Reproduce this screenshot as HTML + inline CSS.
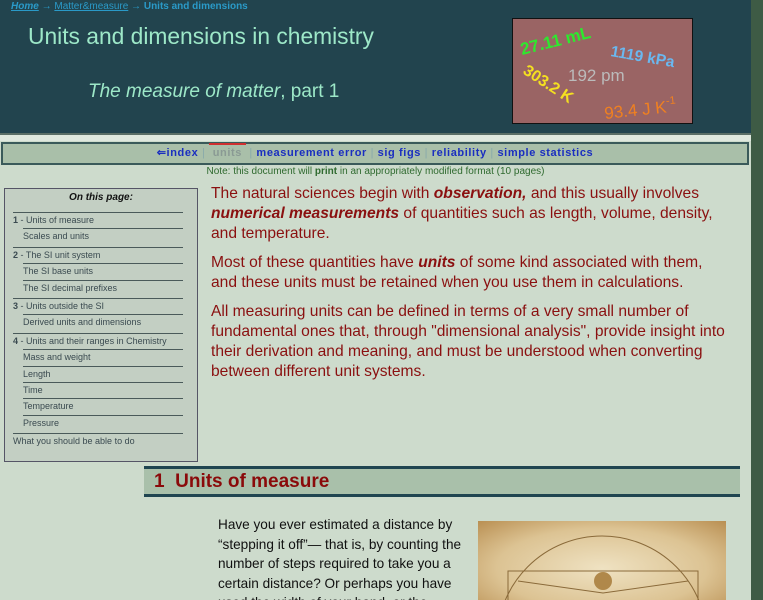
<!DOCTYPE html>
<html><head><meta charset="utf-8"><style>
*{margin:0;padding:0;box-sizing:border-box}
html,body{width:763px;height:600px;overflow:hidden}
body{background:#cddbcc;font-family:"Liberation Sans",Arial,sans-serif;position:relative}
.right{position:absolute;left:751px;top:0;width:12px;height:600px;background:#3e5b45}
.hdr{position:absolute;left:0;top:0;width:751px;height:133px;background:#22444e}
.crumb{position:absolute;left:11px;top:1px;font-size:10px;color:#2a9ac8}
.crumb a{color:#2a9ac8;text-decoration:underline}
.crumb b{color:#2a9ac8}
h1{position:absolute;left:28px;top:23px;font-weight:normal;font-size:22.8px;color:#9de8c8}
.sub{position:absolute;left:88px;top:81px;font-size:19px;color:#9de8c8}
.box{position:absolute;left:512px;top:18px;width:181px;height:106px;background:#9a6464;border:1px solid #111}
.strip{position:absolute;left:0;top:133px;width:751px;height:8px;background:#dfe8de;border-top:2px solid #5a6e66}
.nav{position:absolute;left:1px;top:142px;width:748px;height:23px;background:#a9bfa9;border:2px solid #3a5a5a;text-align:center;font-size:11px;font-weight:bold;letter-spacing:.6px;line-height:19px;color:#1a2ec0}
.nav .s{color:#8aa;font-weight:normal}
.nav .u{color:#8a9a94;position:relative}
.nav .u:before{content:"";position:absolute;left:-4px;right:-4px;top:-4px;height:2px;background:#d03030}
.note{position:absolute;left:0;width:751px;top:166px;text-align:center;font-size:10px;color:#2f6a2f}
.side{position:absolute;left:4px;top:188px;width:194px;height:274px;border:1px solid #556;background:#c3cfc3;font-size:9px;color:#3a4a50}
.side .t{text-align:center;font-style:italic;font-weight:bold;font-size:10px;color:#111;margin-top:3px;height:20px}
.side div.i{height:16.4px;line-height:15px;border-top:1.5px solid #4a5a5a;margin-right:14px}
.side div.j{margin-left:18px}
.side div.k{margin-left:8px}
.side div.g{margin-top:2px}
.main{position:absolute;left:211px;top:184px;width:520px;font-size:15.6px;line-height:20px;color:#8a1010}
.main p{margin-bottom:9px}
.h2{position:absolute;left:144px;top:466px;width:596px;height:31px;background:#a9c0aa;border-top:3px solid #1f4550;border-bottom:3px solid #1f4550;font-size:19px;font-weight:bold;color:#8a0a0a;padding-left:10px;line-height:25px}
.p2{position:absolute;left:218px;top:515px;width:262px;height:85px;overflow:hidden;font-size:13.6px;line-height:19.5px;color:#111}
.img{position:absolute;left:478px;top:521px;width:248px;height:79px;background:radial-gradient(ellipse at 50% 60%,#efe2c2 0%,#dcc393 60%,#b98f52 100%)}
</style></head><body>
<div class="right"></div>
<div class="hdr">
<div class="crumb"><a><i><b>Home</b></i></a> → <a>Matter&amp;measure</a> → <b>Units and dimensions</b></div>
<h1>Units and dimensions in chemistry</h1>
<div class="sub"><i>The measure of matter</i>, part 1</div>
<div class="box"><svg width="181" height="106" style="font-family:'Liberation Sans',sans-serif;font-weight:bold">
<text x="9" y="36" font-size="17" fill="#2ee82e" transform="rotate(-14 9 36)">27.11 mL</text>
<text x="97" y="37" font-size="15.5" fill="#6ab8f0" transform="rotate(10 97 37)">1119 kPa</text>
<text x="55" y="62" font-size="17" fill="#bbb" font-weight="normal">192 pm</text>
<text x="9" y="54" font-size="16" fill="#f4e020" transform="rotate(33 9 54)">303.2 K</text>
<text x="92" y="100" font-size="17" fill="#f08020" font-weight="normal" transform="rotate(-6 92 100)">93.4 J K<tspan font-size="11" dy="-8">-1</tspan></text>
</svg></div>
</div>
<div class="strip"></div>
<div class="nav">⇐index <span class="s">|</span> &nbsp;<span class="u">units</span> &nbsp;<span class="s">|</span> measurement error <span class="s">|</span> sig figs <span class="s">|</span> reliability <span class="s">|</span> simple statistics</div>
<div class="note">Note: this document will <b>print</b> in an appropriately modified format (10 pages)</div>
<div class="side">
<div class="t">On this page:</div>
<div class="i k"><b>1</b> - Units of measure</div>
<div class="i j">Scales and units</div>
<div class="i k g"><b>2</b> - The SI unit system</div>
<div class="i j">The SI base units</div>
<div class="i j">The SI decimal prefixes</div>
<div class="i k g"><b>3</b> - Units outside the SI</div>
<div class="i j">Derived units and dimensions</div>
<div class="i k g"><b>4</b> - Units and their ranges in Chemistry</div>
<div class="i j">Mass and weight</div>
<div class="i j">Length</div>
<div class="i j">Time</div>
<div class="i j">Temperature</div>
<div class="i j">Pressure</div>
<div class="i k g">What you should be able to do</div>
</div>
<div class="main">
<p>The natural sciences begin with <i><b>observation,</b></i> and this usually involves <i><b>numerical measurements</b></i> of quantities such as length, volume, density, and temperature.</p>
<p>Most of these quantities have <i><b>units</b></i> of some kind associated with them, and these units must be retained when you use them in calculations.</p>
<p>All measuring units can be defined in terms of a very small number of fundamental ones that, through "dimensional analysis", provide insight into their derivation and meaning, and must be understood when converting between different unit systems.</p>
</div>
<div class="h2">1&nbsp; Units of measure</div>
<div class="p2">Have you ever estimated a distance by “stepping it off”— that is, by counting the number of steps required to take you a certain distance? Or perhaps you have used the width of your hand, or the distance</div>
<div class="img"><svg width="248" height="79"><circle cx="124" cy="120" r="105" fill="none" stroke="#8a6a3a" stroke-width="1"/><rect x="30" y="50" width="190" height="60" fill="none" stroke="#8a6a3a"/><circle cx="125" cy="60" r="9" fill="#b0884a"/><path d="M40 60 L125 72 L210 60" stroke="#8a6a3a" fill="none"/></svg></div>
</body></html>
